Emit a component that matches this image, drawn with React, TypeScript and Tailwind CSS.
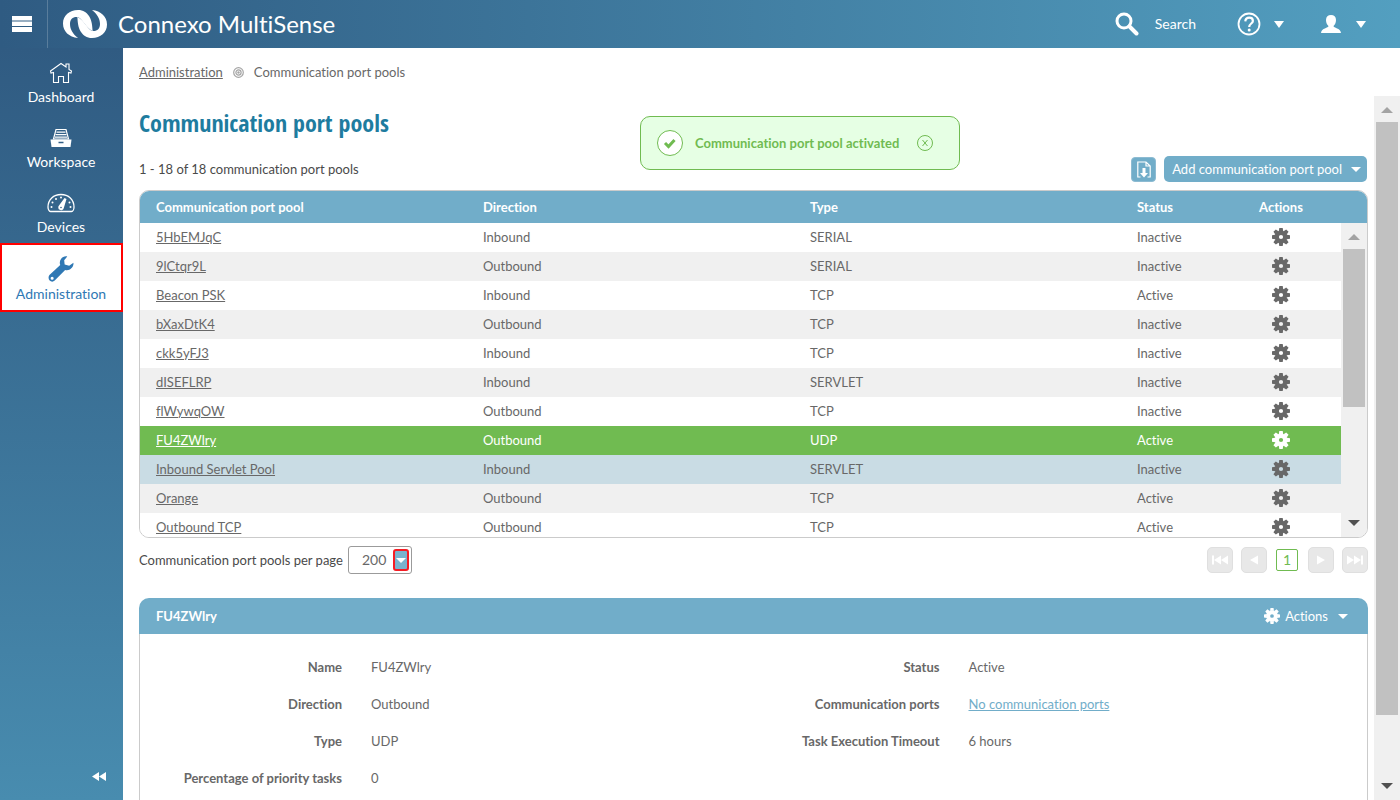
import type { ReactNode } from "react";

type Pool = { name: string; direction: string; type: string; status: string };

const pools: Pool[] = [
  { name: "5HbEMJqC", direction: "Inbound", type: "SERIAL", status: "Inactive" },
  { name: "9lCtqr9L", direction: "Outbound", type: "SERIAL", status: "Inactive" },
  { name: "Beacon PSK", direction: "Inbound", type: "TCP", status: "Active" },
  { name: "bXaxDtK4", direction: "Outbound", type: "TCP", status: "Inactive" },
  { name: "ckk5yFJ3", direction: "Inbound", type: "TCP", status: "Inactive" },
  { name: "dISEFLRP", direction: "Inbound", type: "SERVLET", status: "Inactive" },
  { name: "flWywqOW", direction: "Outbound", type: "TCP", status: "Inactive" },
  { name: "FU4ZWlry", direction: "Outbound", type: "UDP", status: "Active" },
  { name: "Inbound Servlet Pool", direction: "Inbound", type: "SERVLET", status: "Inactive" },
  { name: "Orange", direction: "Outbound", type: "TCP", status: "Active" },
  { name: "Outbound TCP", direction: "Outbound", type: "TCP", status: "Active" },
];

const selectedPool = "FU4ZWlry";
const hoveredPool = "Inbound Servlet Pool";

function rowColors(name: string) {
  if (name === selectedPool) return "bg-[#70bb51] text-white";
  if (name === hoveredPool) return "bg-[#c9dce4] text-[#686868]";
  return "odd:bg-white even:bg-[#f0f0f0] text-[#686868]";
}

function Gear({ className }: { className: string }) {
  return (
    <svg viewBox="-9 -9 18 18" className={className} fill="currentColor" aria-hidden="true">
      <path
        fillRule="evenodd"
        d="M0-6.5A6.5 6.5 0 1 1 0 6.5A6.5 6.5 0 1 1 0-6.5ZM0-2.1A2.1 2.1 0 1 0 0 2.1A2.1 2.1 0 1 0 0-2.1Z"
      />
      {[0, 45, 90, 135, 180, 225, 270, 315].map((a) => (
        <path key={a} d="M-2.2-5.8L-1.7-9H1.7L2.2-5.8Z" transform={`rotate(${a})`} />
      ))}
    </svg>
  );
}

function Caret({ className = "h-[6px] w-[10px]" }: { className?: string }) {
  return (
    <svg viewBox="0 0 10 6" preserveAspectRatio="none" className={className} fill="currentColor" aria-hidden="true">
      <path d="M0 0H10L5 6Z" />
    </svg>
  );
}

function Logo() {
  const half =
    "M16 29C7 28 1 22.500 1 14.500C1 6.500 7.500 1 16 1C21.500 1 24.500 3.500 27 7C29 10 30.300 14 30.600 22C27.500 20.500 25 18 22.500 14.500C19.500 11 18 8 14.500 8C10.500 8 8 10.500 8 15C8 20.500 11 25 16 29Z";
  return (
    <svg viewBox="0 0 46 30" className="h-[30px] w-[46px]" fill="#fff" aria-hidden="true">
      <path d={half} />
      <path d={half} transform="rotate(180 23 15)" />
    </svg>
  );
}

function HouseIcon() {
  return (
    <svg viewBox="0 0 24 22" className="h-[22px] w-6" fill="none" stroke="currentColor" strokeWidth="1.1" aria-hidden="true">
      <path d="M4.500 10.500L2 11L1.500 9L12 1.500L17 5V2H20V7.500L22.500 9L22 11L19.500 10.500V20.500H14.500V14.500H9.500V20.500H4.500Z" />
    </svg>
  );
}

function WorkspaceIcon() {
  return (
    <svg viewBox="0 0 22 20" className="h-5 w-[22px]" aria-hidden="true">
      <path d="M6 1.500H16L18.500 11H3.500Z" fill="none" stroke="#fff" strokeWidth="1.200" />
      <path d="M6.500 4.200H15.500M5.500 6.700H16.500M5 9.200H17" stroke="#fff" strokeWidth="1.300" />
      <path d="M.5 11.500H21.500L20.500 19H1.500Z" fill="#fff" />
      <path d="M8.500 14.500H13.500" stroke="#325f86" strokeWidth="1.500" />
    </svg>
  );
}

function DevicesIcon() {
  return (
    <svg viewBox="0 0 28 20" className="h-5 w-7" aria-hidden="true">
      <path d="M1 14C1 6.500 6.500 1.500 14 1.500S27 6.500 27 14C27 16 26 18.500 24.500 18.500H3.500C2 18.500 1 16 1 14Z" fill="none" stroke="#fff" strokeWidth="1.300" />
      <g fill="#fff">
        <circle cx="4.500" cy="14" r="1" />
        <circle cx="5.500" cy="9.500" r="1" />
        <circle cx="9" cy="6" r="1" />
        <circle cx="14" cy="4.600" r="1" />
        <circle cx="22.500" cy="9.500" r="1" />
        <circle cx="23.500" cy="14" r="1" />
        <path d="M17.500 5L19.500 6L16.800 15A2.800 2.800 0 1 1 12 12.500Z" />
      </g>
      <circle cx="14" cy="14.500" r="0.800" fill="#336288" />
    </svg>
  );
}

function WrenchIcon() {
  return (
    <svg viewBox="0 0 26 27" className="h-[26px] w-[26px]" fill="currentColor" aria-hidden="true">
      <path
        fillRule="evenodd"
        d="M19.500.5C17 0 14.500 1 13 3C11.500 5.200 11.500 7.500 12.200 9.300L1 19.800C-.3 21.300-.2 24 1.200 25.500C2.700 27 5 27 6.500 25.500L17.300 14.500C19.700 15.200 22 14.500 24 12.500C25.500 11 26.200 9 25.900 7L21.500 10.200L16.800 8.800L16.300 4.300ZM3.800 21.500A1.600 1.600 0 1 0 3.800 24.700A1.600 1.600 0 1 0 3.800 21.500Z"
      />
    </svg>
  );
}

function NavItem({ label, children }: { label: string; children: ReactNode }) {
  return (
    <a href="#" className="flex h-[65px] flex-col items-center justify-end text-white">
      <span className="flex h-7 items-center">{children}</span>
      <span className="text-[14px] leading-5">{label}</span>
    </a>
  );
}

function ScrollBar({ thumb }: { thumb: string }) {
  return (
    <div className="flex min-h-0 w-[26px] flex-1 flex-col items-center bg-[#f0f0f0]" aria-hidden="true">
      <div className="flex h-[26px] shrink-0 items-center pt-[2px] text-[#a3a3a3]">
        <Caret className="h-[6px] w-3 rotate-180" />
      </div>
      <div className={`w-[22px] bg-[#c1c1c1] ${thumb}`} />
      <div className="mt-auto flex h-7 shrink-0 items-center text-[#505050]">
        <Caret className="h-[6px] w-3" />
      </div>
    </div>
  );
}

function PagerButton({ label, d }: { label: string; d: string }) {
  return (
    <button
      type="button"
      aria-label={label}
      disabled
      className="flex h-[26px] w-[26px] items-center justify-center rounded-[5px] border border-[#dfdfdf] bg-[#e8e8e8] text-white"
    >
      <svg viewBox="0 0 16 10" className="h-[10px] w-4 shrink-0" fill="currentColor" aria-hidden="true">
        <path d={d} />
      </svg>
    </button>
  );
}

function Fields({ rows, labelWidth }: { rows: [string, ReactNode][]; labelWidth: string }) {
  return (
    <dl className="flex flex-1 flex-col">
      {rows.map(([label, value]) => (
        <div key={label} className="flex h-[37px] items-center gap-[29px]">
          <dt className={`text-right font-bold ${labelWidth}`}>{label}</dt>
          <dd>{value}</dd>
        </div>
      ))}
    </dl>
  );
}

export default function App() {
  return (
    <div className="flex h-screen flex-col overflow-hidden bg-white font-['Lato',sans-serif] text-[13px] leading-5 text-[#686868] [font-variant-ligatures:none]">
      <header className="flex h-12 shrink-0 items-center bg-linear-to-r from-[#2f5b82] to-[#539fc0] text-white">
        <button type="button" aria-label="Menu" className="flex h-12 w-12 items-center justify-center border-r border-white/20 pr-1">
          <svg viewBox="0 0 20 16" className="h-4 w-5" fill="currentColor" aria-hidden="true">
            <path d="M0 0H20V4.500H0ZM0 5.500H20V10H0ZM0 11H20V16H0Z" />
          </svg>
        </button>
        <a href="#" className="ml-[14px] flex items-center gap-[10px] text-[24px] leading-8">
          <Logo />
          Connexo MultiSense
        </a>
        <nav className="ml-auto flex items-center pr-[34px]">
          <button type="button" className="flex items-center gap-4">
            <svg viewBox="0 0 24 24" className="h-6 w-6" fill="none" stroke="currentColor" aria-hidden="true">
              <circle cx="9" cy="9" r="7" strokeWidth="3" />
              <path d="M14.500 14.500L21.500 21.500" strokeWidth="4" strokeLinecap="round" />
            </svg>
            <span className="text-[14px]">Search</span>
          </button>
          <button type="button" aria-label="Help" className="ml-[41px] flex items-center gap-[13px]">
            <svg viewBox="0 0 24 24" className="h-6 w-6" fill="none" stroke="currentColor" aria-hidden="true">
              <circle cx="12" cy="12" r="10.500" strokeWidth="1.800" />
              <path d="M8.300 9.300C8.500 7 10 5.700 12.200 5.700C14.400 5.700 15.900 7 15.900 8.900C15.900 11.500 12.200 11.600 12.200 15" strokeWidth="2.200" />
              <circle cx="12.200" cy="18" r="1.500" fill="currentColor" stroke="none" />
            </svg>
            <Caret className="h-[7px] w-[10px]" />
          </button>
          <button type="button" aria-label="Account" className="ml-[37px] flex items-center gap-[15px]">
            <svg viewBox="0 0 20 18" className="h-[18px] w-5" fill="currentColor" aria-hidden="true">
              <path d="M10 0C13 0 15 1.800 15 5C15 8 13.800 9.800 12.500 11C12.500 13 19.500 13 20 18H0C.5 13 7.500 13 7.500 11C6.200 9.800 5 8 5 5C5 1.800 7 0 10 0Z" />
            </svg>
            <Caret className="h-[7px] w-[10px]" />
          </button>
        </nav>
      </header>

      <div className="flex min-h-0 flex-1">
        <aside className="flex w-[123px] shrink-0 flex-col bg-linear-to-b from-[#305b82] to-[#488caf]">
          <nav className="flex flex-col">
            <div className="-mt-[6px] flex flex-col pr-px pb-[6px]">
              <NavItem label="Dashboard">
                <HouseIcon />
              </NavItem>
              <NavItem label="Workspace">
                <WorkspaceIcon />
              </NavItem>
              <NavItem label="Devices">
                <DevicesIcon />
              </NavItem>
            </div>
            <a
              href="#"
              aria-current="page"
              className="flex h-[69px] flex-col items-center justify-end border-2 border-[#ff0000] bg-white pr-px pb-[6px] text-[#2f78b4]"
            >
              <span className="flex h-7 items-start">
                <WrenchIcon />
              </span>
              <span className="text-[14px] leading-5">Administration</span>
            </a>
          </nav>
          <button type="button" aria-label="Collapse menu" className="mt-auto mr-[17px] mb-[19px] self-end text-white">
            <svg viewBox="0 0 14 9" className="h-[9px] w-[14px]" fill="currentColor" aria-hidden="true">
              <path d="M7 0V9L0 4.500ZM14 0V9L7 4.500Z" />
            </svg>
          </button>
        </aside>

        <div className="relative flex min-w-0 flex-1 flex-col">
          <nav aria-label="Breadcrumb" className="flex h-12 shrink-0 items-center gap-[10px] pl-4">
            <a href="#" className="underline">
              Administration
            </a>
            <svg viewBox="0 0 11 11" className="h-[11px] w-[11px]" fill="none" stroke="#a5a5a5" aria-hidden="true">
              <circle cx="5.500" cy="5.500" r="4.800" strokeWidth="1.200" />
              <circle cx="5.500" cy="5.500" r="2.600" strokeWidth="1.200" />
              <circle cx="5.500" cy="5.500" r="1.200" fill="#a5a5a5" stroke="none" />
            </svg>
            <span>Communication port pools</span>
          </nav>

          <div className="flex min-h-0 flex-1">
            <main className="flex min-w-0 flex-1 flex-col overflow-hidden pr-[6px] pl-4">
              <h1 className="mt-[11px] shrink-0 font-['Open_Sans_Condensed','Roboto_Condensed','Open_Sans',sans-serif] text-[24px] leading-8 font-bold text-[#1e7c9f]">
                Communication port pools
              </h1>

              <div className="mt-[17px] flex h-[26px] shrink-0 items-center">
                <p className="text-[#4a4a4a]">1 - 18 of 18 communication port pools</p>
                <button
                  type="button"
                  aria-label="Export"
                  className="ml-auto flex h-[25px] w-[25px] items-center justify-center rounded-[4px] border border-[#8dbbd2] bg-[#71adc9] text-white"
                >
                  <svg viewBox="0 0 14 17" className="h-[17px] w-[14px]" fill="none" stroke="currentColor" aria-hidden="true">
                    <path d="M3.500 16H.8V1H9L13.200 5V16H10.500M9 1V5H13" strokeWidth="1.200" />
                    <path d="M5.500 7H8.500V12H11L7 16.500L3 12H5.500Z" fill="currentColor" stroke="none" />
                  </svg>
                </button>
                <button type="button" className="mr-px ml-2 flex h-[26px] items-center gap-[9px] rounded-[5px] bg-[#71adc9] pr-[6px] pl-2 text-white">
                  Add communication port pool
                  <Caret className="h-[5px] w-[10px]" />
                </button>
              </div>

              <section className="mt-2 flex h-[348px] shrink-0 overflow-hidden rounded-[10px] border border-[#cbcbcb]">
                <div className="min-w-0 flex-1">
                  <table className="w-full table-fixed border-collapse text-left">
                    <thead className="bg-[#71adc9] text-white">
                      <tr className="h-8">
                        <th className="pl-4">Communication port pool</th>
                        <th className="pl-4">Direction</th>
                        <th className="pl-4">Type</th>
                        <th className="w-[100px] pl-4">Status</th>
                        <th className="w-[120px] text-center">Actions</th>
                      </tr>
                    </thead>
                    <tbody>
                      {pools.map((p) => (
                        <tr key={p.name} className={`h-[29px] *:pb-[2px] ${rowColors(p.name)}`}>
                          <td className="pl-4">
                            <a href="#" className="underline">
                              {p.name}
                            </a>
                          </td>
                          <td className="pl-4">{p.direction}</td>
                          <td className="pl-4">{p.type}</td>
                          <td className="pl-4">{p.status}</td>
                          <td>
                            <button type="button" aria-label={`Actions for ${p.name}`} className="mx-auto block">
                              <Gear className="h-[18px] w-[18px]" />
                            </button>
                          </td>
                        </tr>
                      ))}
                    </tbody>
                  </table>
                </div>
                <div className="flex flex-col">
                  <div className="h-8 shrink-0 bg-[#71adc9]" />
                  <ScrollBar thumb="h-[158px]" />
                </div>
              </section>

              <div className="mt-2 flex h-7 shrink-0 items-center">
                <label htmlFor="per-page" className="text-[#4a4a4a]">
                  Communication port pools per page
                </label>
                <div className="relative ml-[5px]">
                  <select
                    id="per-page"
                    defaultValue="200"
                    className="h-7 w-16 appearance-none rounded-[3px] border border-[#9b9b9b] bg-white pl-[13px] text-[14px]"
                  >
                    <option>50</option>
                    <option>100</option>
                    <option>200</option>
                  </select>
                  <span className="pointer-events-none absolute top-[3px] right-[3px] flex h-[22px] w-4 items-center justify-center rounded-[3px] border-2 border-[#f51c24] bg-[#7ab2cd] text-white">
                    <Caret className="h-[5px] w-[10px]" />
                  </span>
                </div>
                <div className="ml-auto flex items-center">
                  <PagerButton label="First page" d="M0 .5H2V9.500H0ZM9 .5V9.500L2 5ZM16 .5V9.500L9 5Z" />
                  <span className="w-2" />
                  <PagerButton label="Previous page" d="M12 .5V9.500L4 5Z" />
                  <span className="mr-[10px] ml-[9px] flex h-[22px] w-[22px] items-center justify-center rounded-[2px] border border-[#70bb51] text-[14px] text-[#70bb51]">
                    1
                  </span>
                  <PagerButton label="Next page" d="M4 .5V9.500L12 5Z" />
                  <span className="w-2" />
                  <PagerButton label="Last page" d="M16 .5H14V9.500H16ZM7 .5V9.500L14 5ZM0 .5V9.500L7 5Z" />
                </div>
              </div>

              <section className="mt-6 shrink-0 overflow-hidden rounded-t-[10px] text-[#686868]">
                <div className="flex h-9 items-center bg-[#71adc9] pr-5 pl-[17px] text-white">
                  <h2 className="font-bold">FU4ZWlry</h2>
                  <button type="button" className="ml-auto flex items-center gap-[5px]">
                    <Gear className="h-4 w-4" />
                    Actions
                    <Caret className="ml-[5px] h-[5px] w-[10px]" />
                  </button>
                </div>
                <div className="flex border-x border-[#cbcbcb] pt-[14px] pb-5">
                  <Fields
                    labelWidth="w-[202px]"
                    rows={[
                      ["Name", "FU4ZWlry"],
                      ["Direction", "Outbound"],
                      ["Type", "UDP"],
                      ["Percentage of priority tasks", "0"],
                    ]}
                  />
                  <Fields
                    labelWidth="w-[186px]"
                    rows={[
                      ["Status", "Active"],
                      [
                        "Communication ports",
                        <a href="#" className="text-[#71adc9] underline">
                          No communication ports
                        </a>,
                      ],
                      ["Task Execution Timeout", "6 hours"],
                    ]}
                  />
                </div>
              </section>
            </main>
            <div className="flex w-[26px] shrink-0">
              <ScrollBar thumb="h-[593px]" />
            </div>
          </div>

          <div
            role="status"
            className="absolute top-[68px] left-[517px] flex h-[54px] w-80 items-center rounded-[10px] border border-[#70bb51] bg-[#e6ffe4] pl-4 font-bold text-[#70bb51]"
          >
            <svg viewBox="0 0 26 26" className="mr-3 h-[26px] w-[26px]" aria-hidden="true">
              <circle cx="13" cy="13" r="12.500" fill="#fff" stroke="#70bb51" />
              <path d="M8 13L11.500 16.500L17.500 10" fill="none" stroke="#70bb51" strokeWidth="3" />
            </svg>
            Communication port pool activated
            <button type="button" aria-label="Dismiss" className="mr-[26px] ml-auto">
              <svg viewBox="0 0 16 16" className="h-4 w-4" fill="none" stroke="#70bb51" aria-hidden="true">
                <circle cx="8" cy="8" r="7.500" />
                <path d="M5.500 5L10.500 11M10.500 5L5.500 11" />
              </svg>
            </button>
          </div>
        </div>
      </div>
    </div>
  );
}
